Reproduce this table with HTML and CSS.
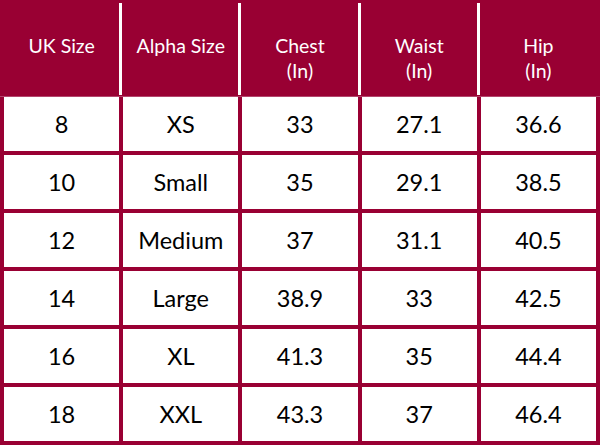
FILE: index.html
```html
<!DOCTYPE html>
<html>
<head>
<meta charset="utf-8">
<link rel="stylesheet" href="styles.css">
</head>
<body>
<div class="chart">
  <div class="head">
    <div class="hcell">UK Size</div>
    <div class="sep"></div>
    <div class="hcell">Alpha Size</div>
    <div class="sep"></div>
    <div class="hcell">Chest<br>(In)</div>
    <div class="sep"></div>
    <div class="hcell">Waist<br>(In)</div>
    <div class="sep"></div>
    <div class="hcell">Hip<br>(In)</div>
  </div>
  <div class="body">
    <div class="cell">8</div><div class="cell">XS</div><div class="cell">33</div><div class="cell">27.1</div><div class="cell">36.6</div>
    <div class="cell">10</div><div class="cell">Small</div><div class="cell">35</div><div class="cell">29.1</div><div class="cell">38.5</div>
    <div class="cell">12</div><div class="cell">Medium</div><div class="cell">37</div><div class="cell">31.1</div><div class="cell">40.5</div>
    <div class="cell">14</div><div class="cell">Large</div><div class="cell">38.9</div><div class="cell">33</div><div class="cell">42.5</div>
    <div class="cell">16</div><div class="cell">XL</div><div class="cell">41.3</div><div class="cell">35</div><div class="cell">44.4</div>
    <div class="cell">18</div><div class="cell">XXL</div><div class="cell">43.3</div><div class="cell">37</div><div class="cell">46.4</div>
  </div>
</div>
</body>
</html>
```
FILE: styles.css
```css
html, body {
  margin: 0;
  padding: 0;
}
body {
  width: 600px;
  height: 445px;
  background: #990033;
  font-family: Lato, "Open Sans", sans-serif;
  overflow: hidden;
}
.chart {
  width: 600px;
  height: 445px;
  background: #990033;
}
.head {
  display: grid;
  grid-template-columns: repeat(4, 1fr 4px) 1fr;
  height: 96px;
  padding: 0 4px;
  border-bottom: 1px solid #b3466d;
}
.hcell {
  color: #ffffff;
  font-size: 19.5px;
  line-height: 25px;
  text-align: center;
  padding-top: 33px;
}
.sep {
  width: 3px;
  margin-top: 3px;
  height: 92px;
  background: #ffffff;
}
.body {
  display: grid;
  grid-template-columns: repeat(5, 1fr);
  grid-auto-rows: 54px;
  gap: 4px;
  padding: 0 4px 4px;
}
.cell {
  background: #ffffff;
  color: #000000;
  font-size: 23.5px;
  display: flex;
  align-items: center;
  justify-content: center;
}
```
